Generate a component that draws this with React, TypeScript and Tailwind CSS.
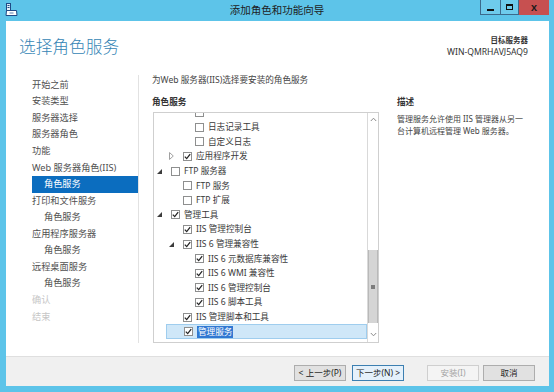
import React from "react"

const navItems = [
  { label: "开始之前" },
  { label: "安装类型" },
  { label: "服务器选择" },
  { label: "服务器角色" },
  { label: "功能" },
  { label: "Web 服务器角色(IIS)" },
  { label: "角色服务", sub: true, active: true },
  { label: "打印和文件服务" },
  { label: "角色服务", sub: true },
  { label: "应用程序服务器" },
  { label: "角色服务", sub: true },
  { label: "远程桌面服务" },
  { label: "角色服务", sub: true },
  { label: "确认", disabled: true },
  { label: "结束", disabled: true },
]

type Row = {
  depth: 0 | 1 | 2
  label: string
  checked: boolean
  expander?: "open" | "closed"
  selected?: boolean
}

const rows: Row[] = [
  { depth: 2, label: "", checked: false },
  { depth: 2, label: "日志记录工具", checked: false },
  { depth: 2, label: "自定义日志", checked: false },
  { depth: 1, label: "应用程序开发", checked: true, expander: "closed" },
  { depth: 0, label: "FTP 服务器", checked: false, expander: "open" },
  { depth: 1, label: "FTP 服务", checked: false },
  { depth: 1, label: "FTP 扩展", checked: false },
  { depth: 0, label: "管理工具", checked: true, expander: "open" },
  { depth: 1, label: "IIS 管理控制台", checked: true },
  { depth: 1, label: "IIS 6 管理兼容性", checked: true, expander: "open" },
  { depth: 2, label: "IIS 6 元数据库兼容性", checked: true },
  { depth: 2, label: "IIS 6 WMI 兼容性", checked: true },
  { depth: 2, label: "IIS 6 管理控制台", checked: true },
  { depth: 2, label: "IIS 6 脚本工具", checked: true },
  { depth: 1, label: "IIS 管理脚本和工具", checked: true },
  { depth: 1, label: "管理服务", checked: true, selected: true },
]

const indent = { 0: "pl-0", 1: "pl-[12px]", 2: "pl-[24px]" }

function Checkbox({ checked }: { checked: boolean }) {
  return (
    <div className="w-[9px] h-[9px] shrink-0 border border-[#8e8f8f] bg-white flex items-center justify-center">
      {checked && (
        <svg width="7" height="7" viewBox="0 0 7 7">
          <polyline points="0.8,3.6 2.7,5.6 6.2,1.2" fill="none" stroke="#262626" strokeWidth="1.3" />
        </svg>
      )}
    </div>
  )
}

function Expander({ kind }: { kind?: "open" | "closed" }) {
  if (kind === "open")
    return (
      <svg width="5" height="5" viewBox="0 0 5 5">
        <polygon points="5,0 5,5 0,5" fill="#3c3c3c" />
      </svg>
    )
  if (kind === "closed")
    return (
      <svg width="5" height="8" viewBox="0 0 5 8">
        <polygon points="0.5,0.5 4.3,4 0.5,7.5" fill="none" stroke="#a0a0a0" strokeWidth="1" />
      </svg>
    )
  return null
}

function TreeRow({ row }: { row: Row }) {
  return (
    <div className={`h-[14.6px] flex ${indent[row.depth]}`}>
      <div
        className={`flex-1 flex items-center ${
          row.selected ? "bg-[#cfe7f8] border border-[#9fcdee]" : ""
        }`}
      >
        <div className="w-[10px] shrink-0 flex items-center justify-center">
          <Expander kind={row.expander} />
        </div>
        <div className="ml-[7px]">
          <Checkbox checked={row.checked} />
        </div>
        {row.label && (
          <span
            className={`ml-[4px] whitespace-nowrap leading-[12px] ${
              row.selected ? "bg-[#3178d2] text-white px-[1px]" : "text-[#3a3a3a]"
            }`}
          >
            {row.label}
          </span>
        )}
      </div>
    </div>
  )
}

function Chevron({ up }: { up?: boolean }) {
  return (
    <svg width="7" height="5" viewBox="0 0 7 5">
      <polyline
        points={up ? "0.8,4 3.5,1.2 6.2,4" : "0.8,1 3.5,3.8 6.2,1"}
        fill="none"
        stroke="#8a8a8a"
        strokeWidth="1"
      />
    </svg>
  )
}

function ScrollBar() {
  return (
    <div className="w-[11px] shrink-0 border-l border-[#d9d9d9] bg-white flex flex-col">
      <div className="h-[13px] flex items-center justify-center">
        <Chevron up />
      </div>
      <div className="h-[124px]" />
      <div className="h-[73px] bg-[#d5d5d5] border-x border-[#b9b9b9] flex items-center justify-center">
        <div className="w-[4px] h-[4px] bg-[#7d7d7d]" />
      </div>
      <div className="h-[4px]" />
      <div className="flex-1 flex items-center justify-center">
        <Chevron />
      </div>
    </div>
  )
}

function WizardIcon() {
  return (
    <svg width="13" height="13" viewBox="0 0 13 13">
      <rect x="1.5" y="0.5" width="4" height="7" fill="#dfeef8" stroke="#1f4a86" />
      <line x1="2.5" y1="2.5" x2="4.5" y2="2.5" stroke="#1f4a86" />
      <line x1="2.5" y1="4.5" x2="4.5" y2="4.5" stroke="#1f4a86" />
      <path d="M1.5 7.5 L11.5 7.5 L12 12.5 L1 12.5 Z" fill="#ffffff" stroke="#1f4a86" />
      <line x1="4.5" y1="10" x2="8.5" y2="10" stroke="#5a7fb0" />
    </svg>
  )
}

function Button({ label, variant }: { label: string; variant?: "default" | "disabled" }) {
  const look =
    variant === "default"
      ? "bg-[#e5f1fb] border-[#3c7fb1] text-[#222]"
      : variant === "disabled"
      ? "bg-[#f4f4f4] border-[#cfcfcf] text-[#a3a3a3]"
      : "bg-[#e1e1e1] border-[#adadad] text-[#222]"
  return (
    <div className={`w-[52px] h-[16px] border flex items-center justify-center text-[8.5px] leading-[12px] ${look}`}>
      {label}
    </div>
  )
}

export default function App() {
  return (
    <div className="w-[554px] h-[392px] bg-[#5dc4e9] flex flex-col font-['Segoe_UI','Noto_Sans','Noto_Sans_CJK_SC',sans-serif] overflow-hidden">
      {/* title bar */}
      <div className="h-[21px] grid grid-cols-[1fr_auto_1fr] shrink-0">
        <div className="pl-[5px] pt-[3px]">
          <WizardIcon />
        </div>
        <div className="text-[10.5px] leading-[20px] text-[#1d1d1d]">添加角色和功能向导</div>
        <div className="flex justify-end items-start pr-[5px]">
          <div className="flex h-[15px] border border-[#3c6a8c] border-t-0">
            <div className="w-[20px] bg-[#6ecbec] border-r border-[#3c6a8c] flex items-end justify-center pb-[3px]">
              <div className="w-[7px] h-[2px] bg-[#111]" />
            </div>
            <div className="w-[17px] bg-[#6ecbec] flex items-center justify-center">
              <div className="w-[7px] h-[6px] border border-[#111] border-t-2" />
            </div>
          </div>
          <div className="w-[30px] h-[15px] bg-[#c75050] flex items-center justify-center text-[9px] font-bold text-[#1b1b1b] leading-none">
            X
          </div>
        </div>
      </div>

      {/* client area */}
      <div className="ml-[6px] mr-[5px] mb-[6px] flex-1 bg-white flex flex-col">
        {/* header */}
        <div className="h-[51px] flex justify-between shrink-0">
          <div className="pl-[13px] pt-[16px] text-[16.7px] leading-[20px] text-[#3585b5] font-light">选择角色服务</div>
          <div className="pr-[21px] pt-[14px] text-right">
            <div className="text-[7.5px] leading-[11px] font-bold text-[#333]">目标服务器</div>
            <div className="text-[8.6px] leading-[12px] text-[#333]">WIN-QMRHAVJ5AQ9</div>
          </div>
        </div>

        {/* body */}
        <div className="flex items-start h-[271px]">
          <div className="w-[133px] h-[268px] mt-[3px] border-r border-[#e2e2e2] pt-[1.7px] shrink-0">
            {navItems.map((item, i) => (
              <div
                key={i}
                className={`h-[16.57px] leading-[16.57px] text-[9.2px] whitespace-nowrap ${
                  item.active
                    ? "ml-[26px] pl-[12px] bg-[#0b6dbf] text-white"
                    : item.sub
                    ? "pl-[38px] text-[#505050]"
                    : item.disabled
                    ? "pl-[26px] text-[#c6c6c6]"
                    : "pl-[26px] text-[#505050]"
                }`}
              >
                {item.label}
              </div>
            ))}
          </div>

          <div className="pl-[13px] text-[8.6px]">
            <div className="pt-[1px] leading-[14px] text-[#444] whitespace-nowrap">为Web 服务器(IIS)选择要安装的角色服务</div>
            <div className="flex">
              <div className="w-[228px]">
                <div className="mt-[7.5px] leading-[14px] font-bold text-[#333]">角色服务</div>
                <div className="mt-[3.5px] ml-[1px] w-[226px] h-[231px] border border-[#cfcfcf] flex">
                  <div className="flex-1 overflow-hidden">
                    <div className="-mt-[7.6px]">
                      {rows.map((row, i) => (
                        <TreeRow key={i} row={row} />
                      ))}
                    </div>
                  </div>
                  <ScrollBar />
                </div>
              </div>
              <div className="ml-[17px]">
                <div className="mt-[7.5px] leading-[14px] font-bold text-[#333]">描述</div>
                <div className="mt-[4px] leading-[12.5px] text-[8px] text-[#444] whitespace-nowrap">
                  管理服务允许使用 IIS 管理器从另一
                  <br />
                  台计算机远程管理 Web 服务器。
                </div>
              </div>
            </div>
          </div>
        </div>

        {/* footer */}
        <div className="mt-auto h-[30px] bg-[#f0f0f0] border-t border-[#dfdfdf] flex justify-end items-start pt-[8px] pr-[14px]">
          <Button label="< 上一步(P)" />
          <div className="ml-[6px]">
            <Button label="下一步(N) >" variant="default" />
          </div>
          <div className="ml-[23px]">
            <Button label="安装(I)" variant="disabled" />
          </div>
          <div className="ml-[4px]">
            <Button label="取消" />
          </div>
        </div>
      </div>
    </div>
  )
}
